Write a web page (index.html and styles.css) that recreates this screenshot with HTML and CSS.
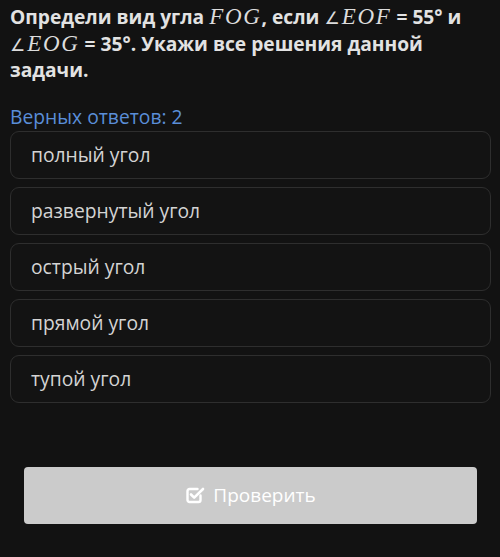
FILE: index.html
```html
<!DOCTYPE html>
<html lang="ru">
<head>
<meta charset="utf-8">
<link rel="stylesheet" href="styles.css">
</head>
<body>
<div class="page">
  <p class="question">Определи вид угла <span class="m">FOG</span>, если <span class="m"><span class="ang">∠</span>EOF</span> = 55° и <span class="m"><span class="ang">∠</span>EOG</span> = 35°. Укажи все решения данной задачи.</p>
  <div class="count">Верных ответов: 2</div>
  <div class="options">
    <div class="option">полный угол</div>
    <div class="option">развернутый угол</div>
    <div class="option">острый угол</div>
    <div class="option">прямой угол</div>
    <div class="option">тупой угол</div>
  </div>
  <div class="actions">
    <button class="check">
      <svg class="icon" viewBox="0 0 20 20" width="19" height="19">
        <path d="M15.5 10.5v4.5a2 2 0 0 1-2 2h-9a2 2 0 0 1-2-2v-9a2 2 0 0 1 2-2h8" fill="none" stroke="#fff" stroke-width="2.4" stroke-linecap="round"/>
        <path d="M6 9.5l3.2 3.2L18 4" fill="none" stroke="#fff" stroke-width="2.6" stroke-linecap="round" stroke-linejoin="round"/>
      </svg>
      <span>Проверить</span>
    </button>
  </div>
</div>
</body>
</html>
```
FILE: styles.css
```css
html, body {
  margin: 0;
  background: #121212;
}
body {
  font-family: "Open Sans", "Noto Sans", sans-serif;
  color: #dcdcdc;
}
.page {
  padding: 4px 9px 0 10px;
}
.question {
  margin: 0;
  font-size: 19.2px;
  font-weight: 700;
  line-height: 26.5px;
  color: #e2e2e2;
}
.m {
  font-family: "Liberation Serif", serif;
  font-style: italic;
  font-weight: 400;
  font-size: 23px;
  letter-spacing: 1.7px;
  line-height: 1;
  color: #dcdcdc;
}
.ang {
  font-style: normal;
  font-family: "DejaVu Sans", sans-serif;
  font-size: 17px;
  letter-spacing: 0;
  margin-right: 2px;
}
.count {
  margin-top: 21px;
  font-size: 19.3px;
  line-height: 24px;
  color: #5a8ed8;
}
.options {
  display: flex;
  flex-direction: column;
  gap: 8px;
  margin-top: 2px;
}
.option {
  height: 46px;
  border: 1px solid #2e2e2e;
  border-radius: 9px;
  padding-left: 20px;
  display: flex;
  align-items: center;
  font-size: 19.3px;
  color: #d4d4d4;
  background: #131313;
}
.actions {
  padding: 64px 14px 0 14px;
}
.check {
  width: 100%;
  height: 57px;
  border: none;
  border-radius: 4px;
  background: #cbcbcb;
  color: #fff;
  font-family: "Open Sans", "Noto Sans", sans-serif;
  font-size: 19px;
  display: flex;
  align-items: center;
  justify-content: center;
  gap: 8px;
}
.icon {
  display: block;
  width: 20px;
  height: 20px;
}
```
